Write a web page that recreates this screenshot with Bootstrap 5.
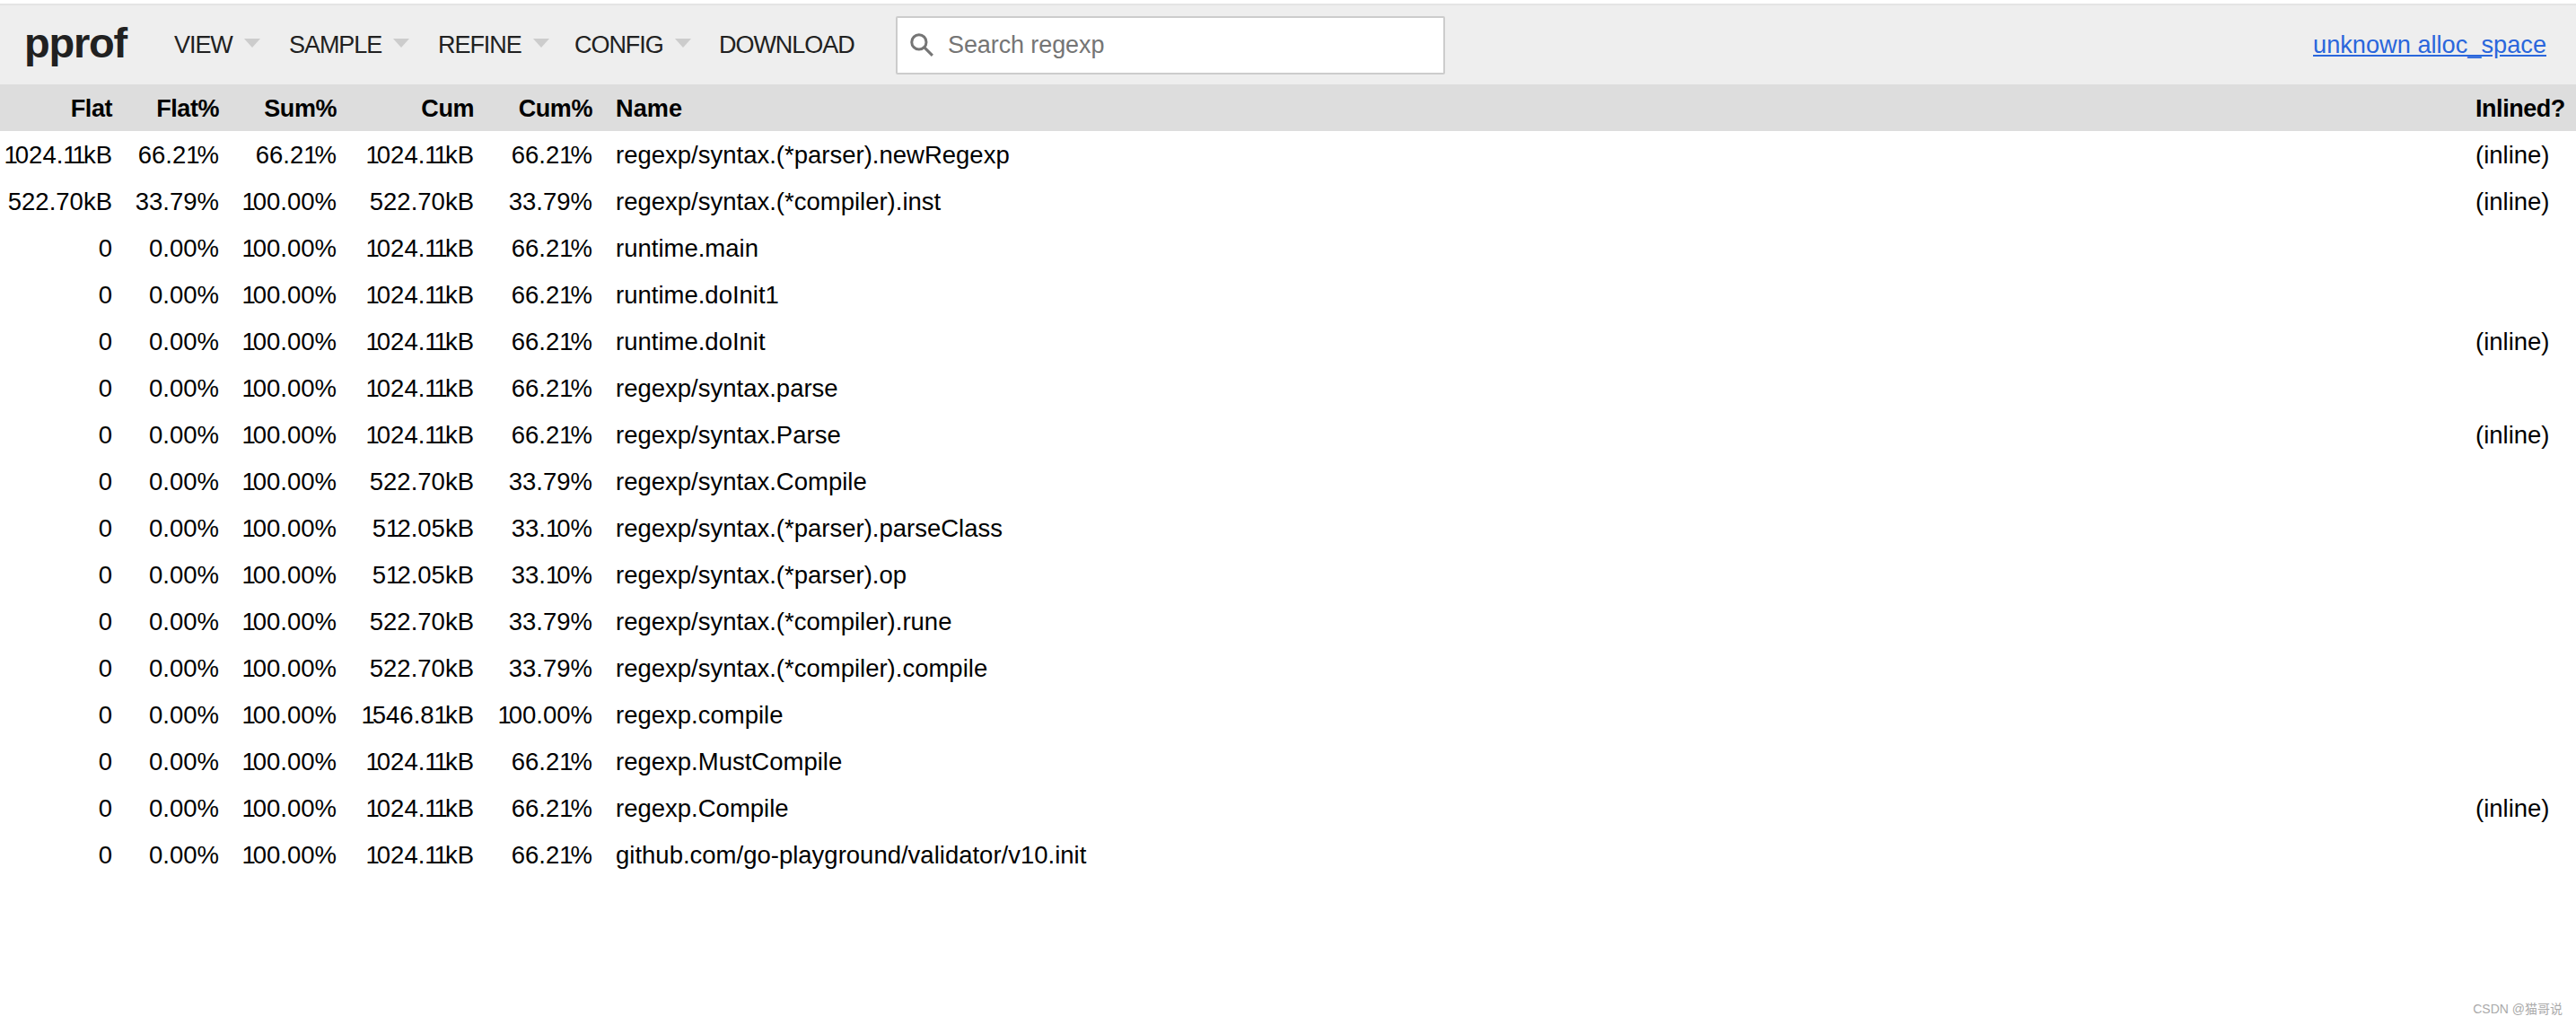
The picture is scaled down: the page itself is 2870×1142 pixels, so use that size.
<!DOCTYPE html>
<html><head><meta charset="utf-8">
<link rel="stylesheet" href="https://cdn.jsdelivr.net/npm/bootstrap@5.3.0/dist/css/bootstrap.min.css">
<style>
html,body{height:100%}
body{font-family:"Liberation Sans",Arial,sans-serif;color:#000;font-size:26px;background:#fff;padding-top:4px;position:relative;overflow:hidden}
.topbar{height:90px;background:#eee;border-top:2px solid #e4e4e4;padding-left:27px;padding-right:33px}
.logo{font-size:47px;font-weight:700;letter-spacing:-1.2px;color:#212121;line-height:1;width:167px;margin-top:-6px}
.menu-item{font-size:27px;letter-spacing:-1.05px;color:#212121;text-transform:uppercase;display:flex;align-items:center}
.tri{width:0;height:0;border-left:9px solid transparent;border-right:9px solid transparent;border-top:10px solid #ccc;margin-left:13px;margin-top:-4px}
.m1{width:128px}.m2{width:166px}.m3{width:152px}.m4{width:161px}.m5{width:197px}
.searchbox{width:612px;height:65px;background:#fff;border:2px solid #ccc;border-radius:2px;padding-left:12px;gap:14px;color:#757575;font-size:27px;letter-spacing:-.1px}
.detail{color:#2a66dc;font-size:27.2px;text-decoration:underline}
.tbl{width:100%;table-layout:fixed;border-collapse:collapse}
.tbl th,.tbl td{padding:2px 0 0;height:52px;white-space:nowrap;font-size:27.5px;vertical-align:middle}
.narrow1{letter-spacing:-3px}
.tbl thead tr{background:#ddd}
.tbl th{font-size:27px;font-weight:700;letter-spacing:-.45px}
.tbl th.c6{letter-spacing:0;font-size:27.2px}
.c1{width:125px}.c2{width:119px}.c3{width:131px}.c4{width:153px}.c5{width:132px}.c7{width:112px}
.c6{padding-left:26px!important}
.wm{position:absolute;right:15px;bottom:7px;font-size:14px;color:#aaa;font-family:"Liberation Sans","Noto Sans CJK SC",sans-serif}
</style></head><body>
<nav class="topbar d-flex align-items-center">
<div class="logo">pprof</div>
<div class="menu-item m1">View<span class="tri"></span></div>
<div class="menu-item m2">Sample<span class="tri"></span></div>
<div class="menu-item m3">Refine<span class="tri"></span></div>
<div class="menu-item m4">Config<span class="tri"></span></div>
<div class="menu-item m5">Download</div>
<div class="searchbox d-flex align-items-center">
<svg width="30" height="30" viewBox="0 0 24 24" fill="none" stroke="#757575" stroke-width="2.4"><circle cx="9.5" cy="9.5" r="6.5"/><path d="M14.5 14.5L21.5 21.5"/></svg>
<span>Search regexp</span></div>
<a href="#" class="detail ms-auto">unknown alloc_space</a>
</nav>
<table class="tbl"><thead><tr>
<th class="c1 text-end">Flat</th><th class="c2 text-end">Flat%</th><th class="c3 text-end">Sum%</th><th class="c4 text-end">Cum</th><th class="c5 text-end">Cum%</th><th class="c6 text-start">Name</th><th class="c7 text-start">Inlined?</th>
</tr></thead><tbody id="tb"></tbody></table>
<script>
var R=[["1024.11kB","66.21%","66.21%","1024.11kB","66.21%","regexp/syntax.(*parser).newRegexp",1],
["522.70kB","33.79%","100.00%","522.70kB","33.79%","regexp/syntax.(*compiler).inst",1],
["0","0.00%","100.00%","1024.11kB","66.21%","runtime.main",0],
["0","0.00%","100.00%","1024.11kB","66.21%","runtime.doInit1",0],
["0","0.00%","100.00%","1024.11kB","66.21%","runtime.doInit",1],
["0","0.00%","100.00%","1024.11kB","66.21%","regexp/syntax.parse",0],
["0","0.00%","100.00%","1024.11kB","66.21%","regexp/syntax.Parse",1],
["0","0.00%","100.00%","522.70kB","33.79%","regexp/syntax.Compile",0],
["0","0.00%","100.00%","512.05kB","33.10%","regexp/syntax.(*parser).parseClass",0],
["0","0.00%","100.00%","512.05kB","33.10%","regexp/syntax.(*parser).op",0],
["0","0.00%","100.00%","522.70kB","33.79%","regexp/syntax.(*compiler).rune",0],
["0","0.00%","100.00%","522.70kB","33.79%","regexp/syntax.(*compiler).compile",0],
["0","0.00%","100.00%","1546.81kB","100.00%","regexp.compile",0],
["0","0.00%","100.00%","1024.11kB","66.21%","regexp.MustCompile",0],
["0","0.00%","100.00%","1024.11kB","66.21%","regexp.Compile",1],
["0","0.00%","100.00%","1024.11kB","66.21%","github.com/go-playground/validator/v10.init",0]];
function num(t){return t.replace(/1/g,'<span class="narrow1">1</span>');}
document.getElementById('tb').innerHTML=R.map(function(r){var s='<tr>';for(var i=0;i<5;i++)s+='<td class="text-end">'+num(r[i])+'</td>';return s+'<td class="c6">'+r[5]+'</td><td>'+(r[6]?'(inline)':'')+'</td></tr>';}).join('');
</script>
<div class="wm">CSDN @猫哥说</div>
</body></html>
